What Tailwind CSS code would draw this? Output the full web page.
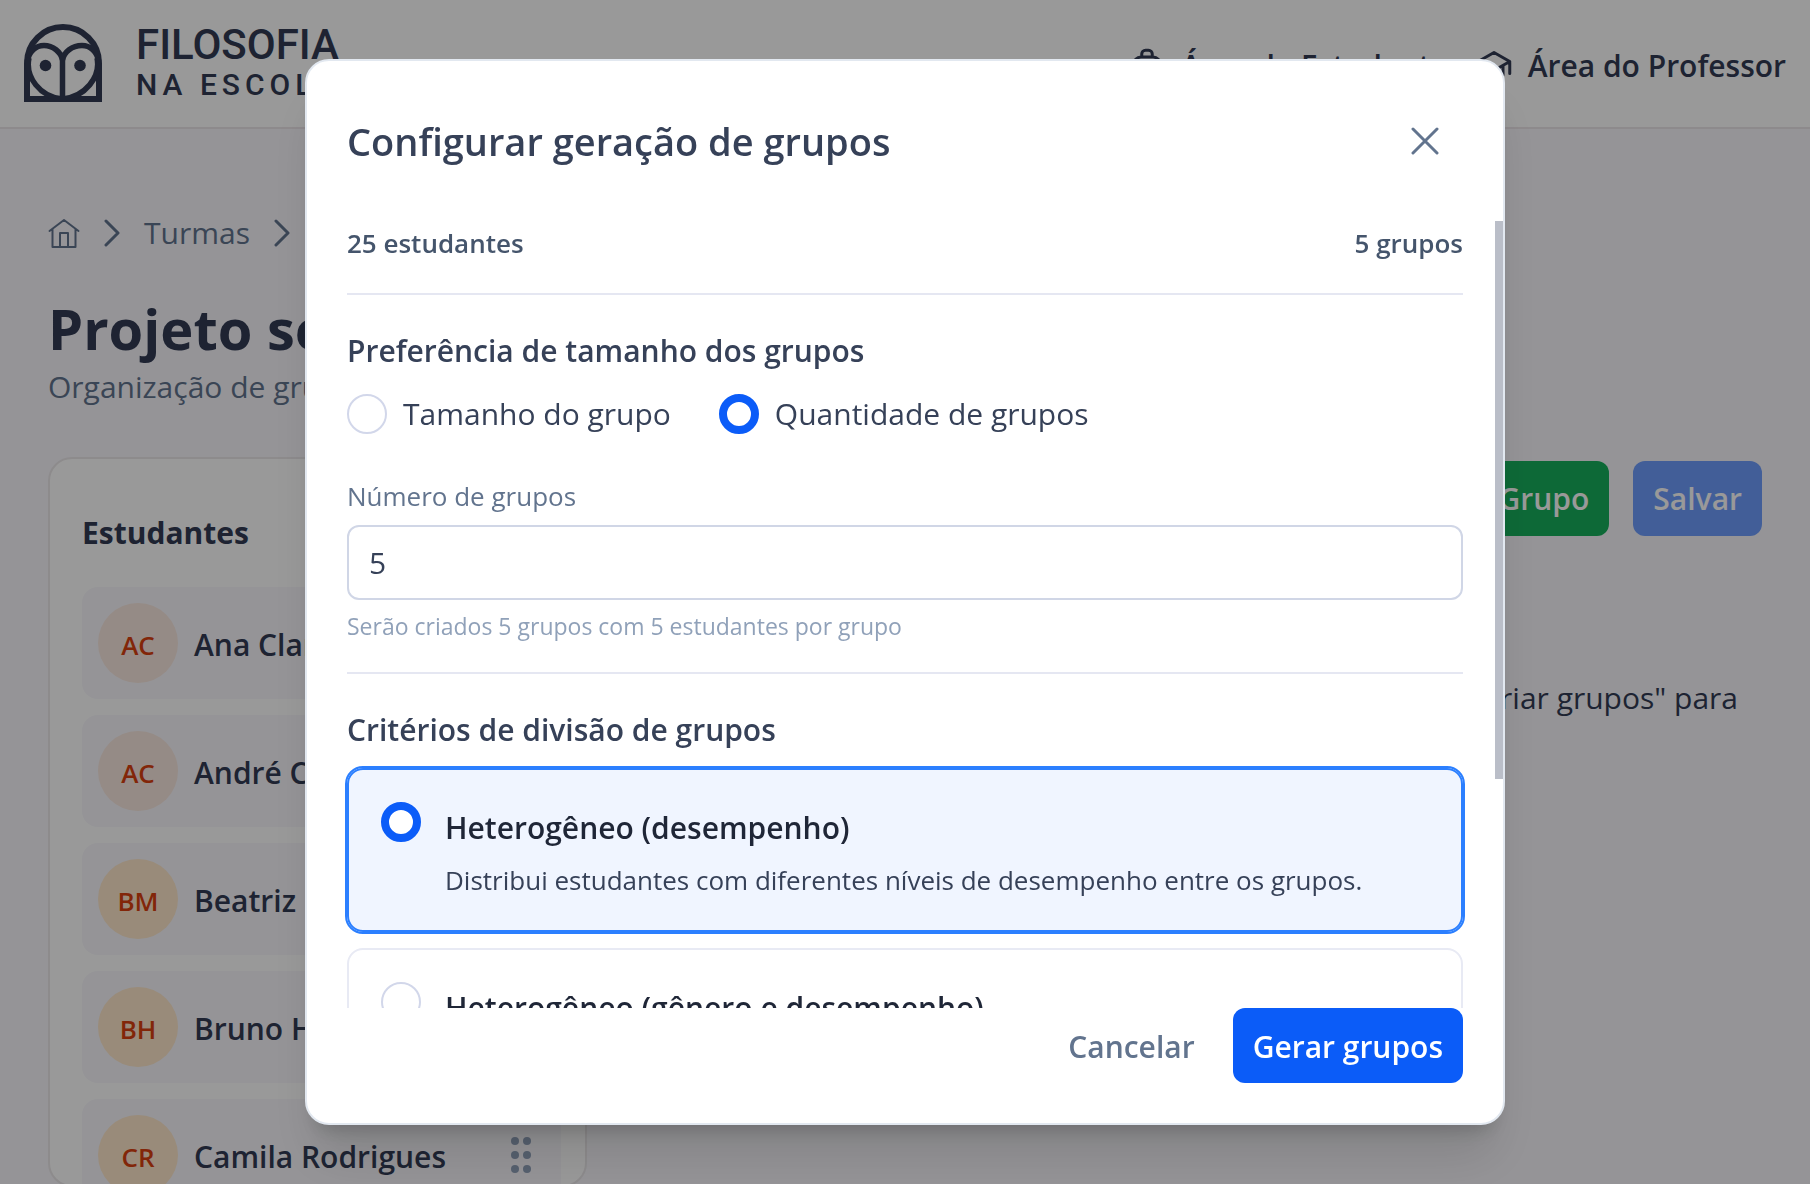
<!DOCTYPE html>
<html lang="pt-BR">
<head>
  <meta charset="UTF-8">
  <meta name="viewport" content="width=device-width, initial-scale=1.0">
  <title>Filosofia na Escola</title>
  <script src="https://cdn.jsdelivr.net/npm/@tailwindcss/browser@4"></script>
</head>
<body class="h-screen overflow-hidden bg-[#f8f7fc] font-['Open_Sans',sans-serif] text-[30px] leading-12 text-[#323b54]">
  <header class="flex h-[129px] items-center justify-between border-b-2 border-[#ece6ea] bg-white px-6">
    <a href="#" class="flex items-center gap-[34px] pb-0.5">
      <svg class="size-[78px]" viewBox="0 0 78 78" fill="none" stroke="currentColor" stroke-width="5.5">
        <path d="M3 75V39a36 36 0 0 1 72 0v36z" stroke-width="6"/>
        <path d="M3 38C5 27 12 21.500 20 21.500C29 21.500 37 28 38.500 36C40 28 48 21.500 58 21.500C66 21.500 73 27 75 38"/>
        <path d="M5 34C1 53 16 73 38.500 75C61 73 77 53 73 34M38.500 34v40"/>
        <circle cx="21.500" cy="41.500" r="5.800" fill="currentColor" stroke="none"/>
        <circle cx="56" cy="41.500" r="5.800" fill="currentColor" stroke="none"/>
      </svg>
      <span class="flex flex-col pt-1 font-[Roboto,sans-serif] font-medium">
        <span class="text-[42px] leading-10">FILOSOFIA</span>
        <span class="text-[30px] leading-10 tracking-[5px]">NA ESCOLA</span>
      </span>
    </a>
    <nav class="flex gap-7 pt-1 font-semibold">
      <a href="#" class="flex items-center gap-4">
        <svg class="size-9" viewBox="0 0 24 24" fill="none" stroke="currentColor" stroke-width="2" stroke-linecap="round" stroke-linejoin="round">
          <path d="M3 11a5 5 0 0 1 5-5h8a5 5 0 0 1 5 5v9a2 2 0 0 1-2 2H5a2 2 0 0 1-2-2zM8.500 6V4a2.500 2.500 0 0 1 2.500-2.500h2A2.500 2.500 0 0 1 15.500 4v2M8 22v-6h8v6M8 11h8"/>
        </svg>
        Área do Estudante
      </a>
      <a href="#" class="flex items-center gap-4">
        <svg class="size-9" viewBox="0 0 24 24" fill="none" stroke="currentColor" stroke-width="2" stroke-linecap="round" stroke-linejoin="round">
          <path d="M22.500 9L12 3 1.500 9 12 15zM22.500 9v8M6 12v6c3 3 9 3 12 0v-6"/>
        </svg>
        Área do Professor
      </a>
    </nav>
  </header>

  <main class="px-12 pt-20">
    <nav class="flex items-center gap-6 text-slate-500" aria-label="Caminho">
      <a href="#" aria-label="Início">
        <svg class="size-8" viewBox="0 0 32 32" fill="none" stroke="currentColor" stroke-width="2" stroke-linecap="round" stroke-linejoin="round">
          <path d="M1.500 14L16 3 30.500 14M4.500 12v18h23V12M12 30V16h8v14"/>
        </svg>
      </a>
      <svg class="h-7 w-4" viewBox="0 0 16 28" fill="none" stroke="currentColor" stroke-width="3" stroke-linecap="round" stroke-linejoin="round"><path d="M2 2l12 12L2 26"/></svg>
      <a href="#">Turmas</a>
      <svg class="h-7 w-4" viewBox="0 0 16 28" fill="none" stroke="currentColor" stroke-width="3" stroke-linecap="round" stroke-linejoin="round"><path d="M2 2l12 12L2 26"/></svg>
    </nav>
    <h1 class="mt-9 text-[56px] leading-[70px] font-bold">Projeto semestral</h1>
    <p class="text-slate-500">Organização de grupos</p>

    <div class="mt-[46px] flex gap-12">
      <section class="h-[730px] w-[539px] shrink-0 overflow-hidden rounded-3xl border-2 border-[#ebe8ea] bg-white pt-[50px] pr-6 pl-8">
        <h2 class="font-bold">Estudantes</h2>
        <ul class="mt-[30px] flex flex-col gap-4 font-semibold">
          <li class="flex h-28 shrink-0 items-center gap-4 rounded-2xl bg-[#f8f7fc] pr-6 pl-4">
            <span class="flex size-20 items-center justify-center rounded-full bg-[#f8e8df] pt-1 text-[26px] text-[#d9400f]">AC</span>
            <span class="flex-1 pt-1">Ana Clara</span>
          </li>
          <li class="flex h-28 shrink-0 items-center gap-4 rounded-2xl bg-[#f8f7fc] pr-6 pl-4">
            <span class="flex size-20 items-center justify-center rounded-full bg-[#f8e8df] pt-1 text-[26px] text-[#d9400f]">AC</span>
            <span class="flex-1 pt-1">André Costa</span>
          </li>
          <li class="flex h-28 shrink-0 items-center gap-4 rounded-2xl bg-[#f8f7fc] pr-6 pl-4">
            <span class="flex size-20 items-center justify-center rounded-full bg-[#ffe8cb] pt-1 text-[26px] text-[#d9400f]">BM</span>
            <span class="flex-1 pt-1">Beatriz Martins</span>
          </li>
          <li class="flex h-28 shrink-0 items-center gap-4 rounded-2xl bg-[#f8f7fc] pr-6 pl-4">
            <span class="flex size-20 items-center justify-center rounded-full bg-[#ffe8cb] pt-1 text-[26px] text-[#d9400f]">BH</span>
            <span class="flex-1 pt-1">Bruno Henrique</span>
          </li>
          <li class="flex h-28 shrink-0 items-center gap-4 rounded-2xl bg-[#f8f7fc] pr-6 pl-4">
            <span class="flex size-20 items-center justify-center rounded-full bg-[#ffe8cb] pt-1 text-[26px] text-[#d9400f]">CR</span>
            <span class="flex-1 pt-1">Camila Rodrigues</span>
            <svg class="h-9 w-8 text-slate-400" viewBox="0 0 32 36" fill="currentColor">
              <circle cx="10" cy="4" r="4"/><circle cx="22" cy="4" r="4"/>
              <circle cx="10" cy="18" r="4"/><circle cx="22" cy="18" r="4"/>
              <circle cx="10" cy="32" r="4"/><circle cx="22" cy="32" r="4"/>
            </svg>
          </li>
        </ul>
      </section>
      <section class="flex flex-1 flex-col items-end pt-1">
        <div class="flex gap-6 font-semibold text-white">
          <button type="button" class="h-[75px] rounded-xl bg-[#17b05d] px-5">Novo Grupo</button>
          <button type="button" class="h-[75px] rounded-xl bg-[#6e9dfd] px-5">Salvar</button>
        </div>
        <p class="mt-[138px] pr-6">Clique em "Criar grupos" para</p>
      </section>
    </div>
  </main>

  <div class="fixed inset-0 flex items-center justify-center bg-black/40">
    <div role="dialog" aria-modal="true" aria-labelledby="dialogTitle" class="relative flex h-[90vh] w-full max-w-[1200px] flex-col rounded-3xl border-2 border-slate-200 bg-white shadow-[0_40px_50px_-10px_rgb(0_0_0/0.12),0_16px_20px_-12px_rgb(0_0_0/0.2)]">
      <div class="flex h-40 shrink-0 items-center justify-between pr-16 pl-10">
        <h2 id="dialogTitle" class="text-[38px] font-semibold text-[#364158]">Configurar geração de grupos</h2>
        <button type="button" aria-label="Fechar" class="text-slate-500">
          <svg class="size-7" viewBox="0 0 28 28" fill="none" stroke="currentColor" stroke-width="3" stroke-linecap="round"><path d="M2 2l24 24M26 2L2 26"/></svg>
        </button>
      </div>

      <form id="groupForm" class="min-h-0 flex-1 overflow-y-auto px-10 text-[#364158] [scrollbar-width:none]">
        <div class="flex justify-between border-b-2 border-[#e5e7f2] pb-7 text-[26px] leading-11 font-semibold text-slate-600">
          <span>25 estudantes</span>
          <span>5 grupos</span>
        </div>

        <fieldset class="mt-8">
          <legend class="font-semibold">Preferência de tamanho dos grupos</legend>
          <div class="mt-[15px] flex gap-12">
            <label class="flex items-center gap-4">
              <input type="radio" name="sizeMode" value="size" class="size-10 appearance-none rounded-full border-2 border-[#d2d7ea] bg-white checked:border-8 checked:border-[#0b5cf8]">
              Tamanho do grupo
            </label>
            <label class="flex items-center gap-4">
              <input type="radio" name="sizeMode" value="count" checked class="size-10 appearance-none rounded-full border-2 border-[#d2d7ea] bg-white checked:border-8 checked:border-[#0b5cf8]">
              Quantidade de grupos
            </label>
          </div>
        </fieldset>

        <div class="mt-[38px] border-b-2 border-[#e5e7f2] pb-7">
          <label for="groupCount" class="block text-[26px] leading-10 text-slate-500">Número de grupos</label>
          <input type="text" inputmode="numeric" id="groupCount" value="5" class="mt-[9px] block h-[75px] w-full rounded-xl border-2 border-[#d0d6e6] px-5">
          <p class="mt-2 text-[23px] leading-9 text-slate-400">Serão criados 5 grupos com 5 estudantes por grupo</p>
        </div>

        <fieldset class="mt-8 pb-8">
          <legend class="font-semibold">Critérios de divisão de grupos</legend>
          <div class="mt-3.5 flex flex-col gap-4">
            <label class="flex items-start gap-6 rounded-2xl border-2 border-[#2b7fff] bg-[#f0f5ff] px-8 pt-8 pb-7 outline-2 outline-[#2b7fff]">
              <input type="radio" name="criteria" value="performance" checked class="size-10 shrink-0 appearance-none rounded-full border-2 border-[#d2d7ea] bg-white checked:border-8 checked:border-[#0b5cf8]">
              <span>
                <span class="block leading-13 font-semibold text-[#1f2637]">Heterogêneo (desempenho)</span>
                <span class="mt-1 block text-[26px] leading-11">Distribui estudantes com diferentes níveis de desempenho entre os grupos.</span>
              </span>
            </label>
            <label class="flex items-start gap-6 rounded-2xl border-2 border-[#e8eaf4] bg-white px-8 pt-8 pb-7">
              <input type="radio" name="criteria" value="gender" class="size-10 shrink-0 appearance-none rounded-full border-2 border-[#d2d7ea] bg-white checked:border-8 checked:border-[#0b5cf8]">
              <span>
                <span class="block leading-13 font-semibold text-[#1f2637]">Heterogêneo (gênero e desempenho)</span>
                <span class="mt-1 block text-[26px] leading-11">Distribui estudantes por gênero e níveis de desempenho.</span>
              </span>
            </label>
          </div>
        </fieldset>
      </form>

      <div class="flex shrink-0 items-center justify-end gap-4 px-10 pb-10 font-semibold">
        <button type="button" class="h-[75px] px-[22px] pt-1 text-slate-500">Cancelar</button>
        <button type="submit" form="groupForm" class="h-[75px] rounded-xl bg-[#0b5cf8] px-5 pt-1 text-white">Gerar grupos</button>
      </div>

      <!-- scroll thumb -->
      <div class="absolute top-40 right-0 h-[558px] w-2 bg-[#babec8]" aria-hidden="true"></div>
    </div>
  </div>
</body>
</html>
